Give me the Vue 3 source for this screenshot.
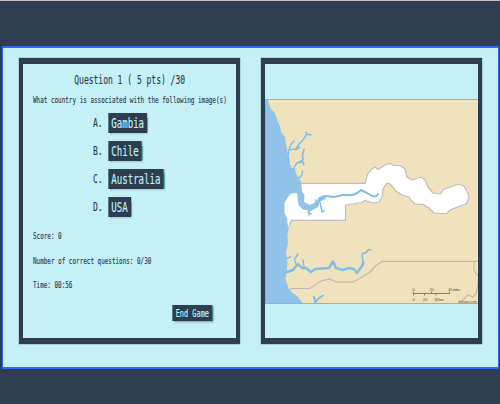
<script setup>
const options = [
  { letter: 'A', label: 'Gambia' },
  { letter: 'B', label: 'Chile' },
  { letter: 'C', label: 'Australia' },
  { letter: 'D', label: 'USA' }
]
</script>

<template>
  <div class="page">
    <main class="board">
      <section class="panel">
        <div class="quiz">
          <h1>Question 1 ( 5 pts) /30</h1>
          <p class="prompt">What country is associated with the following image(s)</p>
          <ol class="options">
            <li v-for="o in options" :key="o.letter">
              <span class="letter">{{ o.letter }}.</span>
              <button class="choice">{{ o.label }}</button>
            </li>
          </ol>
          <p class="stat">Score: 0</p>
          <p class="stat">Number of correct questions: 0/30</p>
          <p class="stat">Time: 00:56</p>
          <button class="end">End Game</button>
        </div>
      </section>
      <section class="panel picture">
        <svg class="map" viewBox="265 99 213 205" preserveAspectRatio="none">
          <rect x="265" y="99" width="213" height="205" fill="#f1e2be" />
          <!-- ocean -->
          <path fill="#90c2ea" d="M265 99H267.500L269 104L271 109L275 113L277 120L280 126L281 132L285 137L286 144L287.500 151L288 158L290 164L292 168L295 168L296 174L299 178L300.500 184L301 192L304 194L300 197L295 194L290 195L286 201L285 209L287 218L289 226L287.500 235L288 243L286 253L287.500 263L286.500 271L285.500 279L288 287L290 291L297 296L303 303.500H265Z" />
          <!-- country -->
          <path fill="#fff" d="M300.500 183.300H365.500C366 177 369 170 375 167L378 169L382 167L386 164.500L390 163.500L394 165.500L400 165.500L405 169L407 177L412 180L421 177L425 180L428 187L433 194L440 194L444 189L451 187L458 184L464 186L468 193L469 198L466 204L460 206L450 210L447 214L440 213.500L434 213L429 208L423 203.500L415 204L411 200L409 197L402 195L396 191L390 184L386 183L383 188L382 197L379 202L374 203L370 202L365 200.500L361 204L357 203L354 204L350 204L345.500 205.500V220.300H291L289 225L288 227L287 218L284.500 213L284.500 203L288 197L291 193.500L297 193L298 196L301 191Z" />
          <path fill="none" stroke="#bdbdc2" stroke-width="1.200" stroke-linejoin="round" d="M300.500 183.300H365.500C366 177 369 170 375 167L378 169.500L382 167L386 164.500L390 163.500L394 165.500L400 165.500L405 169L407 177L412 180L421 177L425 180L428 187L433 193L440 194L444 189L451 187L458 184L464 186L468 193L469 198L466 204L460 206L450 210L447 213.500L440 213.500L434 213L429 208L423 204.500L415 204L411 200L409 197L402 195L396 191L390 184L387 183L383 189L382 197L379 202L374 203L370 202L365 200.500L361 203L357 203L354 204L350 204L345.500 205.500V220.300H291.500L289.500 225" />
          <path fill="#90c2ea" d="M299.500 178L301.500 185L302 192L304.500 195L304 202L310 205L316 202L319 197L324 195L326 199L320 201L318 207L311 211L303 209.500L298.500 205L297 193L300 190Z" />
          <g fill="none" stroke="#80bde8" stroke-linecap="round" stroke-linejoin="round">
            <path stroke-width="2" d="M319 201L325 196L334 197L343 195L353 195L358 192.500L361 190L367 193L372 196L376 196.500L378 194" />
            <path stroke-width="1.500" d="M309 208V215M308 212L311 214M320 202L322 212L324 211M317 204L315.500 200" />
            <path stroke-width="1.500" d="M289 162L288 156L289 150L296 149L299 144L303 140L307 134L311 135M307 134L306 132M289 150L291 144L294 141M296 150L300 147M294 167L297 163L303 160L302.500 155L304 149M297 163L303 162L304 165M299 178L302 175L302.500 171" />
            <path stroke-width="2.400" d="M287 272L293 270L298 264L302 268L306 268L311 272L315 269L329 268L333 261.500L336 268L343 270L349 268L354 269L357 273L362 266L363.500 262" />
            <path stroke-width="1.500" d="M363 264L362 254L367 252L368 249.500L371 250M296 264L294.500 259L298 254M304 267L303 260M287 258L291 257" />
            <path stroke-width="2" d="M315 303L318 299L323 295.500M315 301L314 297" />
          </g>
          <path fill="none" stroke="#bfb8b4" stroke-width="1.200" d="M290 291L291 288.500L310 288.500L315 285L321 281L329 279L337 282L353 282L362 277L370 272L376 265.500L382 261.300H478M474 262V270L478 276M478 281V286L476 294L473 297L468 295L464 299L460 302" />
          <g class="scale" fill="#5c5446">
            <path fill="none" stroke="#7a705c" stroke-width="0.900" d="M413.500 293.500H450M413.500 291.500V295.500M431.500 291.500V293.500M449.500 291.500V293.500M424.500 293.500V295.500M436 293.500V295.500" />
            <text x="412.500" y="290.500">0</text>
            <text x="429.500" y="290.500">20</text>
            <text x="448" y="290.500" textLength="12">40 miles</text>
            <text x="412.500" y="301">0</text>
            <text x="423" y="301">20</text>
            <text x="434.500" y="301" textLength="9">40 km</text>
            <text class="credit" x="458" y="303" textLength="19">d-maps.com</text>
          </g>
          <path fill="none" stroke="#a5adb0" stroke-width="1" d="M265.500 303.500V99.500H478M265 303.500H478" />
        </svg>
      </section>
    </main>
  </div>
</template>

<style>
body { background: #2e3e50; }
</style>

<style scoped>
.page {
  box-sizing: border-box;
  width: 500px;
  height: 404px;
  padding: 46px 1px 0 2px;
  background: #2e3e50;
  box-shadow: inset 0 1px #bdbfbd;
  overflow: hidden;
}
.board {
  box-sizing: border-box;
  display: flex;
  justify-content: space-between;
  height: 323px;
  padding: 10px 16px 0;
  border: solid #3468ee;
  border-width: 2px 1px;
  background: #c5f0f6;
}
.panel {
  box-sizing: border-box;
  width: 221px;
  height: 286px;
  border: solid #2c3e50;
  border-width: 6px 4px;
  box-shadow: 0 0 0 0.500px #8fb5bf;
}
.quiz {
  box-sizing: border-box;
  width: 320px;
  height: 274px;
  padding: 9px 15px 0;
  transform: scaleX(0.6667);
  transform-origin: 0 0;
  font-family: "DejaVu Sans Mono", "Liberation Mono", monospace;
  color: #2c3e50;
  white-space: nowrap;
  -webkit-text-stroke: 0.150px;
}
h1 {
  margin: 0;
  font-size: 12px;
  font-weight: 400;
  line-height: 14px;
  text-align: center;
}
p { margin: 0; font-size: 8.950px; line-height: 10px; }
.prompt { margin-top: 8px; }
.options {
  display: flex;
  flex-direction: column;
  gap: 8px;
  margin: 8px 0 0;
  padding: 0 0 0 90px;
  list-style: none;
}
.options li { display: flex; align-items: center; height: 20px; }
.letter { width: 23px; font-size: 12px; }
button {
  padding: 0;
  border: 0;
  background: #2c3e50;
  color: #c5f0f6;
  font-family: inherit;
  box-shadow: 2px 1px 2px #55a5a5;
}
.choice {
  height: 20px;
  padding: 0 4.500px;
  font-size: 13.600px;
  line-height: 20px;
}
.stat { margin-top: 14.500px; }
.options + .stat { margin-top: 14px; }
.end {
  display: block;
  width: 60px;
  height: 16px;
  margin: 15px 21px 0 auto;
  font-size: 10.400px;
  line-height: 16px;
}
.picture { padding-top: 35px; }
.map { display: block; width: 213px; height: 205px; }
.scale { font: 4px "Liberation Sans", sans-serif; }
.credit { font-size: 3.500px; }
</style>
